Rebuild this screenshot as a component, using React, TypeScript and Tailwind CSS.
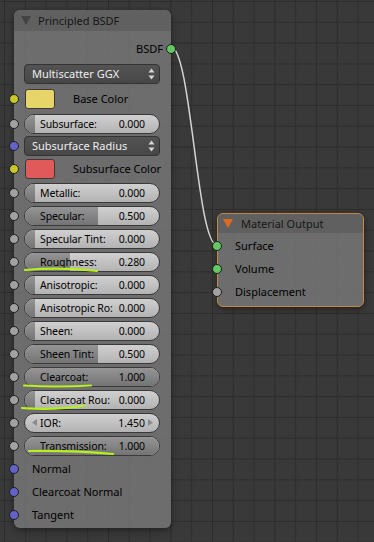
import React from "react";

type SocketKind = "shader" | "color" | "vector" | "float";

const socketColor: Record<SocketKind, string> = {
  shader: "bg-[#63c763]",
  color: "bg-[#c7c729]",
  vector: "bg-[#6363c7]",
  float: "bg-[#a1a1a1]",
};

function Socket({ kind, side = "left" }: { kind: SocketKind; side?: "left" | "right" }) {
  return (
    <span
      className={`absolute top-1/2 h-[10px] w-[10px] -translate-y-1/2 rounded-full border border-[#1e1e1e] ${socketColor[kind]} ${
        side === "left" ? "left-[-5px]" : "right-[-5px]"
      }`}
    />
  );
}

function Slider({ label, value }: { label: string; value: number }) {
  return (
    <div className="relative h-[20px] w-[136px] overflow-hidden rounded-full border border-[#3a3a3a] bg-linear-to-b from-[#d0d0d0] to-[#b3b3b3]">
      <div
        className="absolute inset-y-0 left-0 bg-linear-to-b from-[#959595] to-[#747474]"
        style={{ width: 10 + 126 * value }}
      />
      <div className="relative flex h-full items-center justify-between gap-[3px] whitespace-nowrap pl-[15px] pr-[14px] text-[10.5px] leading-[14px] tracking-[-0.1px] text-black">
        <span>{label}:</span>
        <span>{value.toFixed(3)}</span>
      </div>
    </div>
  );
}

function NumField({ label, value }: { label: string; value: string }) {
  return (
    <div className="relative flex h-[20px] w-[136px] items-center rounded-full border border-[#3a3a3a] bg-linear-to-b from-[#d0d0d0] to-[#b3b3b3] text-[10.5px] leading-[14px] text-black">
      <svg width="5" height="7" viewBox="0 0 5 7" className="absolute left-[7px]">
        <path d="M5 0 L0 3.5 L5 7 Z" fill="#8a8a8a" />
      </svg>
      <span className="pl-[15px]">{label}:</span>
      <span className="ml-auto pr-[14px]">{value}</span>
      <svg width="5" height="7" viewBox="0 0 5 7" className="absolute right-[6px]">
        <path d="M0 0 L5 3.5 L0 7 Z" fill="#8a8a8a" />
      </svg>
    </div>
  );
}

function Dropdown({ text }: { text: string }) {
  return (
    <div className="relative flex h-[20px] w-[136px] items-center rounded-[4px] border border-[#333333] bg-linear-to-b from-[#535353] to-[#474747] pl-[7px] text-[11px] leading-[14px] text-[#eeeeee]">
      <span>{text}</span>
      <svg width="7" height="12" viewBox="0 0 7 12" className="absolute right-[4px]">
        <path d="M3.5 0.5 L6.5 4.5 L0.5 4.5 Z" fill="#d8d8d8" />
        <path d="M3.5 11.5 L6.5 7.5 L0.5 7.5 Z" fill="#d8d8d8" />
      </svg>
    </div>
  );
}

function ColorRow({ color, label }: { color: string; label: string }) {
  return (
    <div className="flex items-center">
      <div className={`ml-[1px] h-[20px] w-[30px] rounded-[3px] border border-[#3a3a3a] ${color}`} />
      <span className="ml-[18px] text-[11px] leading-[14px] text-black">{label}</span>
    </div>
  );
}

type Row =
  | { type: "slider"; label: string; value: number }
  | { type: "num"; label: string; value: string }
  | { type: "input"; label: string; kind: SocketKind };

const rows: Row[] = [
  { type: "slider", label: "Metallic", value: 0 },
  { type: "slider", label: "Specular", value: 0.5 },
  { type: "slider", label: "Specular Tint", value: 0 },
  { type: "slider", label: "Roughness", value: 0.28 },
  { type: "slider", label: "Anisotropic", value: 0 },
  { type: "slider", label: "Anisotropic Ro", value: 0 },
  { type: "slider", label: "Sheen", value: 0 },
  { type: "slider", label: "Sheen Tint", value: 0.5 },
  { type: "slider", label: "Clearcoat", value: 1 },
  { type: "slider", label: "Clearcoat Rou", value: 0 },
  { type: "num", label: "IOR", value: "1.450" },
  { type: "slider", label: "Transmission", value: 1 },
  { type: "input", label: "Normal", kind: "vector" },
  { type: "input", label: "Clearcoat Normal", kind: "vector" },
  { type: "input", label: "Tangent", kind: "vector" },
];

function PrincipledNode() {
  return (
    <div className="absolute left-[14px] top-[10px] flex h-[518px] w-[157px] flex-col rounded-[6px] bg-[rgba(118,118,118,0.86)] shadow-[0_2px_6px_rgba(0,0,0,0.45)]">
      <div className="flex h-[21px] items-center rounded-t-[6px] bg-[rgba(96,96,96,0.92)]">
        <svg width="10" height="9" viewBox="0 0 10 9" className="ml-[7px]">
          <path d="M0 0 L10 0 L5 9 Z" fill="#434343" />
        </svg>
        <span className="ml-[7px] text-[11px] leading-[14px] text-[#161616]">Principled BSDF</span>
      </div>
      <div className="h-[5px]" />
      <div className="relative flex h-[25px] items-center justify-end pr-[8px] text-[11px] leading-[14px] text-black">
        BSDF
        <Socket kind="shader" side="right" />
      </div>
      <div className="relative flex h-[25px] items-center pl-[10px]">
        <Dropdown text="Multiscatter GGX" />
      </div>
      <div className="relative flex h-[26px] items-center pl-[10px]">
        <Socket kind="color" />
        <ColorRow color="bg-[#e8d56a]" label="Base Color" />
      </div>
      <div className="relative flex h-[23px] items-center pl-[10px]">
        <Socket kind="float" />
        <Slider label="Subsurface" value={0} />
      </div>
      <div className="relative flex h-[22px] items-center pl-[10px]">
        <Socket kind="vector" />
        <Dropdown text="Subsurface Radius" />
      </div>
      <div className="relative flex h-[24px] items-center pl-[10px]">
        <Socket kind="color" />
        <ColorRow color="bg-[#e05a5a]" label="Subsurface Color" />
      </div>
      {rows.map((r) => (
        <div key={r.label} className="relative flex h-[23px] items-center pl-[10px]">
          {r.type === "slider" && (
            <>
              <Socket kind="float" />
              <Slider label={r.label} value={r.value} />
            </>
          )}
          {r.type === "num" && (
            <>
              <Socket kind="float" />
              <NumField label={r.label} value={r.value} />
            </>
          )}
          {r.type === "input" && (
            <>
              <Socket kind={r.kind} />
              <span className="pl-[8px] text-[11px] leading-[14px] text-black">{r.label}</span>
            </>
          )}
        </div>
      ))}
    </div>
  );
}

const outputs: { label: string; kind: SocketKind }[] = [
  { label: "Surface", kind: "shader" },
  { label: "Volume", kind: "shader" },
  { label: "Displacement", kind: "float" },
];

function OutputNode() {
  return (
    <div className="absolute left-[217px] top-[213px] flex h-[94px] w-[147px] flex-col rounded-[6px] border border-[#c4883f] bg-[rgba(118,118,118,0.86)] shadow-[0_2px_6px_rgba(0,0,0,0.45)]">
      <div className="flex h-[19px] items-center rounded-t-[5px] bg-[rgba(96,96,96,0.92)]">
        <svg width="10" height="9" viewBox="0 0 10 9" className="ml-[5px]">
          <path d="M0 0 L10 0 L5 9 Z" fill="#e0691d" />
        </svg>
        <span className="ml-[8px] text-[11px] leading-[14px] text-[#161616]">Material Output</span>
      </div>
      {outputs.map((s, i) => (
        <div key={s.label} className={`relative flex h-[23px] items-center pl-[17px] ${i === 0 ? "mt-[1px]" : ""}`}>
          <span
            className={`absolute left-[-6px] top-1/2 h-[10px] w-[10px] -translate-y-1/2 rounded-full border border-[#1e1e1e] ${socketColor[s.kind]}`}
          />
          <span className="text-[11px] leading-[14px] text-black">{s.label}</span>
        </div>
      ))}
    </div>
  );
}

export default function App() {
  return (
    <div className="relative h-[542px] w-[374px] overflow-hidden bg-[#393939] bg-[linear-gradient(to_right,#2d2d2d_1px,transparent_1px),linear-gradient(to_bottom,#2d2d2d_1px,transparent_1px)] [background-position:4px_1px] [background-size:20.8px_20.8px] font-['Noto_Sans',sans-serif]">
      <svg width="374" height="542" className="absolute inset-0">
        <path d="M171 47 C191 47 197 245 217 245" fill="none" stroke="#d4d4d4" strokeWidth="1.5" />
      </svg>
      <PrincipledNode />
      <OutputNode />
      <svg width="374" height="542" className="pointer-events-none absolute inset-0">
        <g fill="none" stroke="#b6f01e" strokeWidth="2.2" strokeLinecap="round">
          <path d="M25 270 Q62 267 97 271" />
          <path d="M24 385.5 Q57 387.5 91 385.5" />
          <path d="M22 408 Q55 410.5 85 405.5" />
          <path d="M29 451 Q70 450 113 454" />
        </g>
      </svg>
    </div>
  );
}
